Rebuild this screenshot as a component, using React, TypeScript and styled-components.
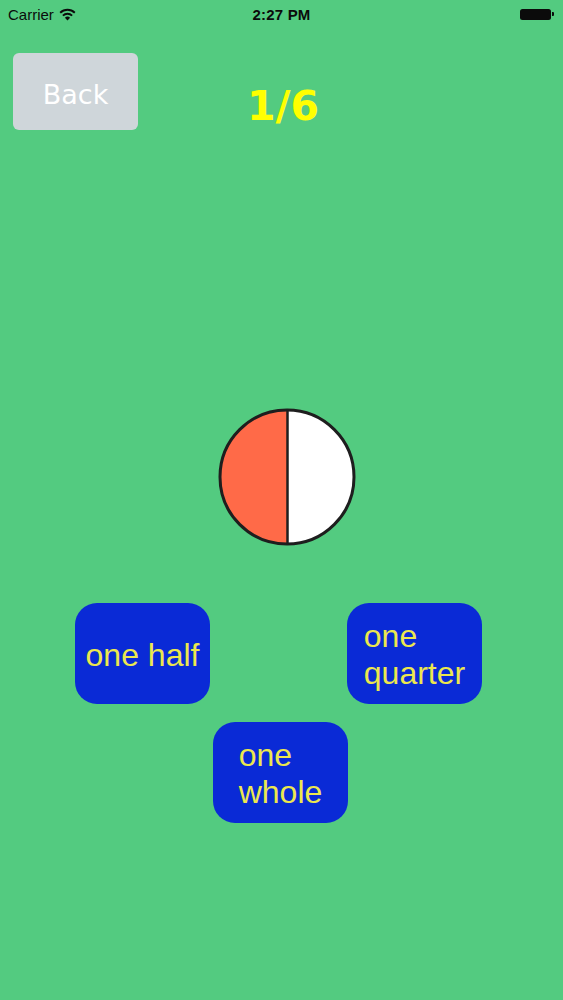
import React from "react";
import styled, { createGlobalStyle } from "styled-components";

const Global = createGlobalStyle`
  html, body { margin: 0; padding: 0; background: #53cb80; }
  * { box-sizing: border-box; }
`;

const Screen = styled.div`
  width: 563px;
  height: 1000px;
  background: #53cb80;
  display: flex;
  flex-direction: column;
  font-family: "Liberation Sans", Arial, sans-serif;
  overflow: hidden;
`;

const StatusBar = styled.div`
  height: 30px;
  display: grid;
  grid-template-columns: 1fr auto 1fr;
  align-items: center;
  padding: 0 9px 2px 8px;
  font-size: 15px;
  color: #0b0b0b;
`;

const Carrier = styled.div`
  display: flex;
  align-items: center;
  gap: 5px;
`;

const Clock = styled.div`
  font-weight: bold;
  letter-spacing: 0.2px;
  padding-left: 1px;
`;

const Battery = styled.div`
  justify-self: end;
  display: flex;
  align-items: center;
  gap: 1px;
`;

const BatteryBody = styled.div`
  width: 31px;
  height: 11px;
  background: #0b0b0b;
  border-radius: 2.5px;
`;

const BatteryNub = styled.div`
  width: 2px;
  height: 4px;
  background: #0b0b0b;
  border-radius: 0 1px 1px 0;
`;

const Header = styled.div`
  display: grid;
  grid-template-columns: 1fr auto 1fr;
  align-items: start;
  padding: 23px 13px 0 13px;
`;

const BackButton = styled.button`
  justify-self: start;
  width: 125px;
  height: 77px;
  border: none;
  border-radius: 6px;
  background: #cfd6da;
  color: #ffffff;
  font-family: "DejaVu Sans", sans-serif;
  font-size: 27px;
  padding: 6px 0 0 0;
  cursor: pointer;
`;

const Title = styled.div`
  padding-top: 29px;
  margin-left: 3px;
  color: #ffff00;
  font-family: "DejaVu Sans", sans-serif;
  font-weight: bold;
  font-size: 41px;
  line-height: 48px;
`;

const PieWrap = styled.div`
  margin-top: 277px;
  padding-left: 217px;
  height: 140px;
  line-height: 0;
`;

const Row = styled.div<{ $left: number; $top: number }>`
  display: flex;
  gap: 137px;
  padding-left: ${(p) => p.$left}px;
  margin-top: ${(p) => p.$top}px;
`;

const Choice = styled.button`
  width: 135px;
  height: 101px;
  border: none;
  border-radius: 22px;
  background: #0a2ad6;
  color: #ece74e;
  font-family: "Liberation Sans", Arial, sans-serif;
  font-size: 32px;
  line-height: 37px;
  display: flex;
  align-items: center;
  justify-content: center;
  padding: 3px 6px 0 6px;
  cursor: pointer;
`;

const Label = styled.span`
  text-align: left;
  display: inline-block;
`;

const Wifi = () => (
  <svg width="17" height="13" viewBox="0 0 17 13">
    <path d="M8.5 12.5 L5.9 9.7 A3.8 3.8 0 0 1 11.1 9.7 Z" fill="#0b0b0b" />
    <path d="M3.9 7.6 A6.6 6.6 0 0 1 13.1 7.6" stroke="#0b0b0b" strokeWidth="1.9" fill="none" />
    <path d="M1.2 4.8 A10.4 10.4 0 0 1 15.8 4.8" stroke="#0b0b0b" strokeWidth="1.9" fill="none" />
  </svg>
);

const Pie = () => (
  <svg width="140" height="140" viewBox="0 0 140 140">
    <circle cx="70" cy="70" r="67" fill="#ffffff" />
    <path d="M70 3 A67 67 0 0 0 70 137 Z" fill="#ff6a48" />
    <circle cx="70" cy="70" r="67" fill="none" stroke="#1e1e1e" strokeWidth="3" />
    <line x1="70.5" y1="3" x2="70.5" y2="137" stroke="#1e1e1e" strokeWidth="2.5" />
  </svg>
);

export default function App() {
  return (
    <>
      <Global />
      <Screen>
        <StatusBar>
          <Carrier>
            Carrier <Wifi />
          </Carrier>
          <Clock>2:27 PM</Clock>
          <Battery>
            <BatteryBody />
            <BatteryNub />
          </Battery>
        </StatusBar>
        <Header>
          <BackButton>Back</BackButton>
          <Title>1/6</Title>
          <div />
        </Header>
        <PieWrap>
          <Pie />
        </PieWrap>
        <Row $left={75} $top={56}>
          <Choice>
            <Label>one half</Label>
          </Choice>
          <Choice>
            <Label>
              one
              <br />
              quarter
            </Label>
          </Choice>
        </Row>
        <Row $left={213} $top={18}>
          <Choice>
            <Label>
              one
              <br />
              whole
            </Label>
          </Choice>
        </Row>
      </Screen>
    </>
  );
}
